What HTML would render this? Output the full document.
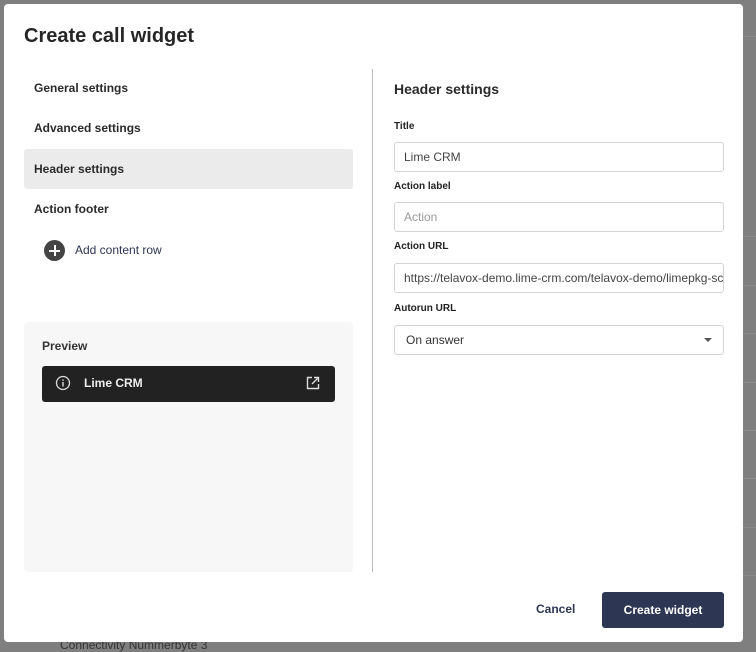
<!DOCTYPE html>
<html><head><style>
*{box-sizing:border-box;margin:0;padding:0}
body{width:756px;height:650px;background:#7f7f7f;font-family:"Liberation Sans",sans-serif;position:relative;overflow:hidden;color:#262626}
.bgline{position:absolute;left:743px;width:13px;height:1px;background:#8a8a8a}
.modal{position:absolute;left:4px;top:4px;width:739px;height:638px;background:#fff;border-radius:4px}
.abs{position:absolute}
h1{position:absolute;left:20px;top:21px;font-size:20px;font-weight:bold;color:#262626}
.nav{position:absolute;left:20px;width:329px;height:40px;font-size:12px;font-weight:bold;line-height:40px;padding-left:10px;border-radius:3px;color:#2a2a2a}
.lbl{position:absolute;left:390px;font-size:10px;font-weight:bold;color:#222}
.inp{position:absolute;left:390px;width:330px;height:30px;border:1px solid #d4d4d4;border-radius:3px;font-size:12px;line-height:28px;padding-left:9px;color:#444;white-space:nowrap;overflow:hidden}
</style></head><body>
<div class="bgline" style="top:36px"></div><div class="bgline" style="top:236px"></div><div class="bgline" style="top:285px"></div><div class="bgline" style="top:333px"></div><div class="bgline" style="top:382px"></div><div class="bgline" style="top:430px"></div><div class="bgline" style="top:478px"></div><div class="bgline" style="top:527px"></div><div class="bgline" style="top:575px"></div>
<div class="abs" style="left:60px;top:638px;font-size:12px;color:#333">Connectivity Nummerbyte 3</div>
<div class="modal">
<h1>Create call widget</h1>
<div class="nav" style="top:64px">General settings</div>
<div class="nav" style="top:104px">Advanced settings</div>
<div class="nav" style="top:145px;background:#ebebeb">Header settings</div>
<div class="nav" style="top:185px">Action footer</div>
<div class="abs" style="left:40px;top:236px;width:21px;height:21px;border-radius:50%;background:#444"></div>
<div class="abs" style="left:45px;top:245.5px;width:11px;height:2px;background:#fff"></div>
<div class="abs" style="left:49.5px;top:241px;width:2px;height:11px;background:#fff"></div>
<div class="abs" style="left:71px;top:239px;font-size:12px;color:#2d3652">Add content row</div>
<div class="abs" style="left:20px;top:318px;width:329px;height:250px;background:#f7f7f7;border-radius:4px"></div>
<div class="abs" style="left:38px;top:335px;font-size:12px;font-weight:bold;color:#333">Preview</div>
<div class="abs" style="left:38px;top:362px;width:293px;height:36px;background:#222;border-radius:3px"></div>
<svg class="abs" style="left:51px;top:371px" width="16" height="16" viewBox="0 0 16 16"><circle cx="8" cy="8" r="6.5" fill="none" stroke="#ddd" stroke-width="1.3"/><rect x="7.3" y="7" width="1.4" height="4.5" fill="#ddd"/><rect x="7.3" y="4.5" width="1.4" height="1.4" fill="#ddd"/></svg>
<div class="abs" style="left:80px;top:372px;font-size:12px;font-weight:bold;color:#eee">Lime CRM</div>
<svg class="abs" style="left:302px;top:372px" width="14" height="14" viewBox="0 0 14 14"><path d="M6 1.5H1.5v11h11V8" fill="none" stroke="#ddd" stroke-width="1.4"/><path d="M8 1.5h4.5V6M12.5 1.5L6 8" fill="none" stroke="#ddd" stroke-width="1.4"/></svg>
<div class="abs" style="left:368px;top:65px;width:1px;height:503px;background:#bbb"></div>
<div class="abs" style="left:390px;top:77px;font-size:14px;font-weight:bold;color:#2a2a2a">Header settings</div>
<div class="lbl" style="top:117px">Title</div>
<div class="inp" style="top:138px">Lime CRM</div>
<div class="lbl" style="top:177px">Action label</div>
<div class="inp" style="top:198px;color:#999">Action</div>
<div class="lbl" style="top:237px">Action URL</div>
<div class="inp" style="top:259px">https://telavox-demo.lime-crm.com/telavox-demo/limepkg-sc</div>
<div class="lbl" style="top:299px">Autorun URL</div>
<div class="inp" style="top:321px;padding-left:11px;color:#333">On answer</div>
<div class="abs" style="left:700px;top:334px;width:0;height:0;border-left:4px solid transparent;border-right:4px solid transparent;border-top:4px solid #555"></div>
<div class="abs" style="left:532px;top:598px;font-size:12px;font-weight:bold;color:#2d3652">Cancel</div>
<div class="abs" style="left:598px;top:588px;width:122px;height:36px;background:#2d3652;border-radius:3px;color:#fff;font-size:12px;font-weight:bold;text-align:center;line-height:36px">Create widget</div>
</div>
</body></html>
